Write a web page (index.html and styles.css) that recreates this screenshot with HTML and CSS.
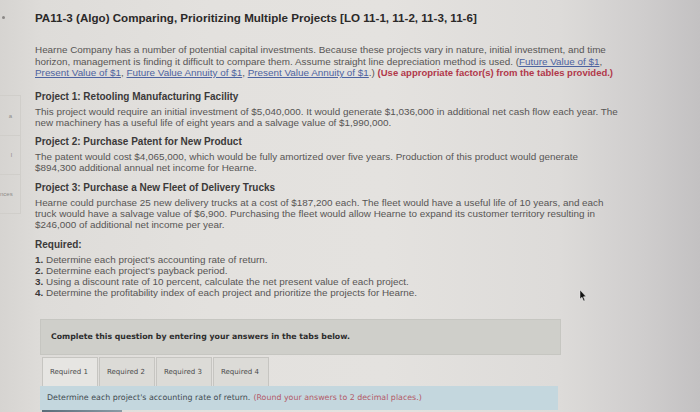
FILE: index.html
```html
<!DOCTYPE html>
<html>
<head>
<meta charset="utf-8">
<link rel="stylesheet" href="styles.css">
</head>
<body>
<div class="screen">
  <aside class="sidebar">
    <span class="dot"></span>
    <div class="side-list">
      <div class="side-item"><span>a</span></div>
      <div class="side-item"><span>l</span></div>
      <div class="side-item"><span>nces</span></div>
    </div>
  </aside>
  <main class="main">
    <h1 class="title">PA11-3 (Algo) Comparing, Prioritizing Multiple Projects [LO 11-1, 11-2, 11-3, 11-6]</h1>
    <p class="intro">Hearne Company has a number of potential capital investments. Because these projects vary in nature, initial investment, and time<br>horizon, management is finding it difficult to compare them. Assume straight line depreciation method is used. <span class="paren">(<a href="#">Future Value of $1</a>,</span><br><a href="#">Present Value of $1</a>, <a href="#">Future Value Annuity of $1</a>, <a href="#">Present Value Annuity of $1</a>.) <strong class="warn">(Use appropriate factor(s) from the tables provided.)</strong></p>

    <section class="block">
      <h2 class="head">Project 1: Retooling Manufacturing Facility</h2>
      <p class="body">This project would require an initial investment of $5,040,000. It would generate $1,036,000 in additional net cash flow each year. The<br>new machinery has a useful life of eight years and a salvage value of $1,990,000.</p>
    </section>
    <section class="block">
      <h2 class="head">Project 2: Purchase Patent for New Product</h2>
      <p class="body">The patent would cost $4,065,000, which would be fully amortized over five years. Production of this product would generate<br>$894,300 additional annual net income for Hearne.</p>
    </section>
    <section class="block">
      <h2 class="head">Project 3: Purchase a New Fleet of Delivery Trucks</h2>
      <p class="body">Hearne could purchase 25 new delivery trucks at a cost of $187,200 each. The fleet would have a useful life of 10 years, and each<br>truck would have a salvage value of $6,900. Purchasing the fleet would allow Hearne to expand its customer territory resulting in<br>$246,000 of additional net income per year.</p>
    </section>
    <section class="block">
      <h2 class="head">Required:</h2>
      <ol class="req">
        <li><b>1.</b> Determine each project's accounting rate of return.</li>
        <li><b>2.</b> Determine each project's payback period.</li>
        <li><b>3.</b> Using a discount rate of 10 percent, calculate the net present value of each project.</li>
        <li><b>4.</b> Determine the profitability index of each project and prioritize the projects for Hearne.</li>
      </ol>
    </section>

    <div class="answer">
      <div class="banner">Complete this question by entering your answers in the tabs below.</div>
      <div class="tabs">
        <div class="tab active">Required 1</div>
        <div class="tab">Required 2</div>
        <div class="tab">Required 3</div>
        <div class="tab">Required 4</div>
      </div>
      <div class="instr">Determine each project's accounting rate of return. <span class="red">(Round your answers to 2 decimal places.)</span></div>
      <div class="content-edge"></div>
    </div>
  </main>
  <svg class="cursor" width="8" height="12" viewBox="0 0 8 12"><path d="M1 0 L1 9 L3 7.2 L4.6 11 L6 10.4 L4.4 6.8 L7 6.6 Z" fill="#111" stroke="#eee" stroke-width="0.5"/></svg>
</div>
</body>
</html>
```
FILE: styles.css
```css
html, body {
  margin: 0;
  padding: 0;
}
body {
  width: 700px;
  height: 412px;
  overflow: hidden;
  font-family: "Liberation Sans", Arial, sans-serif;
}
.screen {
  position: relative;
  display: flex;
  width: 700px;
  height: 412px;
  background: linear-gradient(90deg, #d6d4d1 0%, #dedcd9 6%, #e3e1de 30%, #e4e2df 55%, #dddbd9 80%, #cfcdcd 92%, #c3c1c2 100%);
}
.sidebar {
  width: 22px;
  flex: none;
  padding-top: 16px;
  box-sizing: border-box;
}
.dot {
  display: block;
  width: 3px;
  height: 3px;
  border-radius: 50%;
  background: #8a8886;
  margin-left: 2px;
}
.side-list {
  margin-top: 76px;
  border: 1px solid #d0ceca;
  border-left: none;
  width: 20px;
}
.side-item {
  height: 39px;
  border-top: 1px solid #d0ceca;
  font-size: 6px;
  color: #8e8c8a;
  display: flex;
  align-items: center;
  justify-content: flex-end;
  padding-right: 8px;
  box-sizing: border-box;
  overflow: hidden;
}
.side-item:first-child { border-top: none; }
.side-item:last-child { justify-content: flex-start; padding: 0; }
.main {
  flex: 1;
  padding: 10px 0 0 13px;
}
.title {
  margin: 0 0 18px 0;
  font-size: 11.6px;
  line-height: 16px;
  font-weight: 700;
  color: #2b2929;
  white-space: nowrap;
}
.intro {
  margin: 0 0 11px 0;
  font-size: 9.9px;
  line-height: 11.5px;
  color: #575554;
  white-space: nowrap;
}
.intro a {
  color: #4d63a0;
  text-decoration: underline;
}
.warn {
  color: #b1384a;
  font-weight: 700;
  font-size: 9.5px;
}
.block {
  margin-bottom: 7px;
}
.head {
  margin: 0 0 3px 0;
  font-size: 10px;
  line-height: 13px;
  font-weight: 700;
  color: #3b3939;
}
.body {
  margin: 0;
  font-size: 9.9px;
  line-height: 11.3px;
  color: #575554;
  white-space: nowrap;
}
.req {
  list-style: none;
  margin: 0;
  padding: 0;
  font-size: 9.9px;
  line-height: 11.3px;
  color: #575554;
}
.req b { color: #3b3939; }
.answer {
  margin-top: 20px;
  margin-left: 5px;
  width: 521px;
}
.banner {
  background: #cfcfca;
  border: 1px solid #c6c6c1;
  height: 36px;
  box-sizing: border-box;
  padding-left: 10px;
  display: flex;
  align-items: center;
  font-family: "DejaVu Sans", Verdana, sans-serif;
  font-weight: 700;
  font-size: 7.8px;
  color: #2d2d2d;
}
.tabs {
  display: flex;
  gap: 1px;
  padding: 2px 0 0 2px;
  height: 31px;
  box-sizing: border-box;
}
.tab {
  width: 56px;
  background: #dcdbd7;
  border: 1px solid #c6c5c1;
  border-bottom: none;
  box-sizing: border-box;
  display: flex;
  align-items: center;
  padding-left: 7px;
  font-family: "DejaVu Sans", Verdana, sans-serif;
  font-size: 7px;
  color: #4a4a4a;
}
.tab.active {
  background: #e6e5e2;
}
.instr {
  background: #c4d7de;
  height: 24px;
  box-sizing: border-box;
  padding-left: 7px;
  display: flex;
  align-items: center;
  font-family: "DejaVu Sans", Verdana, sans-serif;
  font-size: 7.9px;
  color: #3f4a50;
  width: 518px;
}
.red { color: #b35a68; margin-left: 3px; }
.content-edge {
  height: 4px;
  width: 80px;
  margin-left: 2px;
  background: linear-gradient(90deg, #5a6d7a, #8a9ba6);
}
.cursor {
  position: absolute;
  left: 579px;
  top: 290px;
}
```
